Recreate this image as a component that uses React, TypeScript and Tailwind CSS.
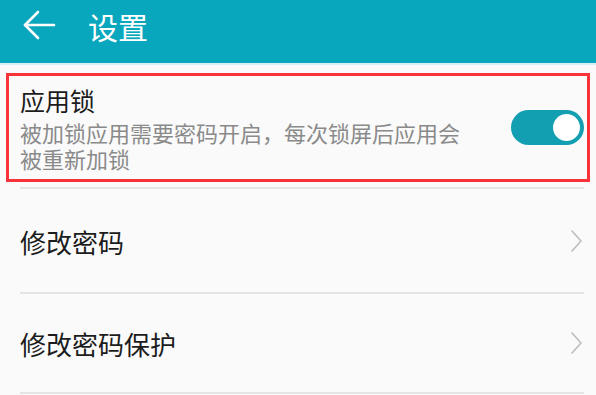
export default function App() {
  const font = { fontFamily: '"Noto Sans CJK SC", "Noto Sans", sans-serif' };
  return (
    <div className="w-[596px] h-[395px] overflow-hidden bg-[#fafafa]" style={font}>
      <header className="h-[63px] bg-[#08a7be] flex items-center">
        <svg width="34" height="32" viewBox="0 0 34 32" className="ml-[22px] mt-[-14px]" fill="none" stroke="#ffffff" strokeWidth="2.6" strokeLinecap="round" strokeLinejoin="round">
          <path d="M32 16H3" />
          <path d="M16 3L3 16l13 13" />
        </svg>
        <span className="ml-[32px] mt-[-12px] text-[30px] leading-none text-white">设置</span>
      </header>
      <div className="h-[2px] bg-[#d8f0f4]" />

      <div className="mt-[8px] mx-[6px] h-[109px] border-[3px] border-[#f8333a] flex items-center justify-between pl-[11px] pr-[3px]">
        <div className="flex flex-col">
          <span className="text-[25px] leading-[30px] text-[#1c1c1c]">应用锁</span>
          <span className="mt-[4px] w-[452px] text-[22px] leading-[26px] text-[#8a8a8a]">
            被加锁应用需要密码开启，每次锁屏后应用会被重新加锁
          </span>
        </div>
        <div className="w-[73px] h-[35px] rounded-full bg-[#139fb2] flex items-center justify-end pr-[4px]">
          <div className="w-[27px] h-[27px] rounded-full bg-white" />
        </div>
      </div>

      <div className="mt-[5px] ml-[20px] mr-[12px] h-[2px] bg-[#e4e4e4]" />
      <div className="h-[103px] flex items-center justify-between pl-[20px] pr-[14px]">
        <span className="text-[26px] text-[#1c1c1c] mt-[2px]">修改密码</span>
        <svg width="11" height="22" viewBox="0 0 11 22" fill="none" stroke="#bdbdbd" strokeWidth="1.6" strokeLinecap="round" strokeLinejoin="round">
          <path d="M1 1l9 10-9 10" />
        </svg>
      </div>
      <div className="ml-[20px] mr-[12px] h-[2px] bg-[#e4e4e4]" />
      <div className="h-[98px] flex items-center justify-between pl-[20px] pr-[14px]">
        <span className="text-[26px] text-[#1c1c1c]">修改密码保护</span>
        <svg width="11" height="22" viewBox="0 0 11 22" fill="none" stroke="#bdbdbd" strokeWidth="1.6" strokeLinecap="round" strokeLinejoin="round">
          <path d="M1 1l9 10-9 10" />
        </svg>
      </div>
      <div className="ml-[20px] mr-[12px] h-[2px] bg-[#e4e4e4]" />
    </div>
  );
}
